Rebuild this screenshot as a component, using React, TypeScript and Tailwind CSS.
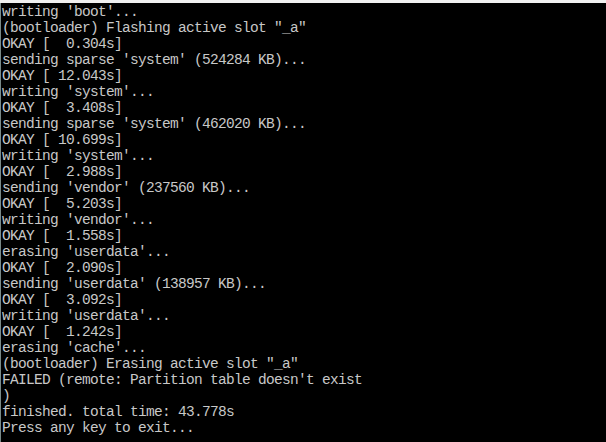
import React from "react";

const lines = [
  "writing 'boot'...",
  '(bootloader) Flashing active slot "_a"',
  "OKAY [  0.304s]",
  "sending sparse 'system' (524284 KB)...",
  "OKAY [ 12.043s]",
  "writing 'system'...",
  "OKAY [  3.408s]",
  "sending sparse 'system' (462020 KB)...",
  "OKAY [ 10.699s]",
  "writing 'system'...",
  "OKAY [  2.988s]",
  "sending 'vendor' (237560 KB)...",
  "OKAY [  5.203s]",
  "writing 'vendor'...",
  "OKAY [  1.558s]",
  "erasing 'userdata'...",
  "OKAY [  2.090s]",
  "sending 'userdata' (138957 KB)...",
  "OKAY [  3.092s]",
  "writing 'userdata'...",
  "OKAY [  1.242s]",
  "erasing 'cache'...",
  '(bootloader) Erasing active slot "_a"',
  "FAILED (remote: Partition table doesn't exist",
  ")",
  "finished. total time: 43.778s",
  "Press any key to exit...",
];

export default function App() {
  return (
    <div className="w-[606px] h-[442px] bg-black flex flex-col overflow-hidden">
      <div className="h-[3px] w-full bg-[#f0f0f0] shrink-0" />
      <div className="flex flex-1">
        <div className="w-[1px] bg-[#7a8a88] shrink-0" />
        <pre
          className="pl-[1px] pt-[1px] m-0 text-[#c8c8c8] text-[14.5px] leading-[16px] tracking-[-0.7px] whitespace-pre"
          style={{ fontFamily: '"Liberation Mono", monospace' }}
        >
          {lines.join("\n")}
        </pre>
      </div>
    </div>
  );
}
